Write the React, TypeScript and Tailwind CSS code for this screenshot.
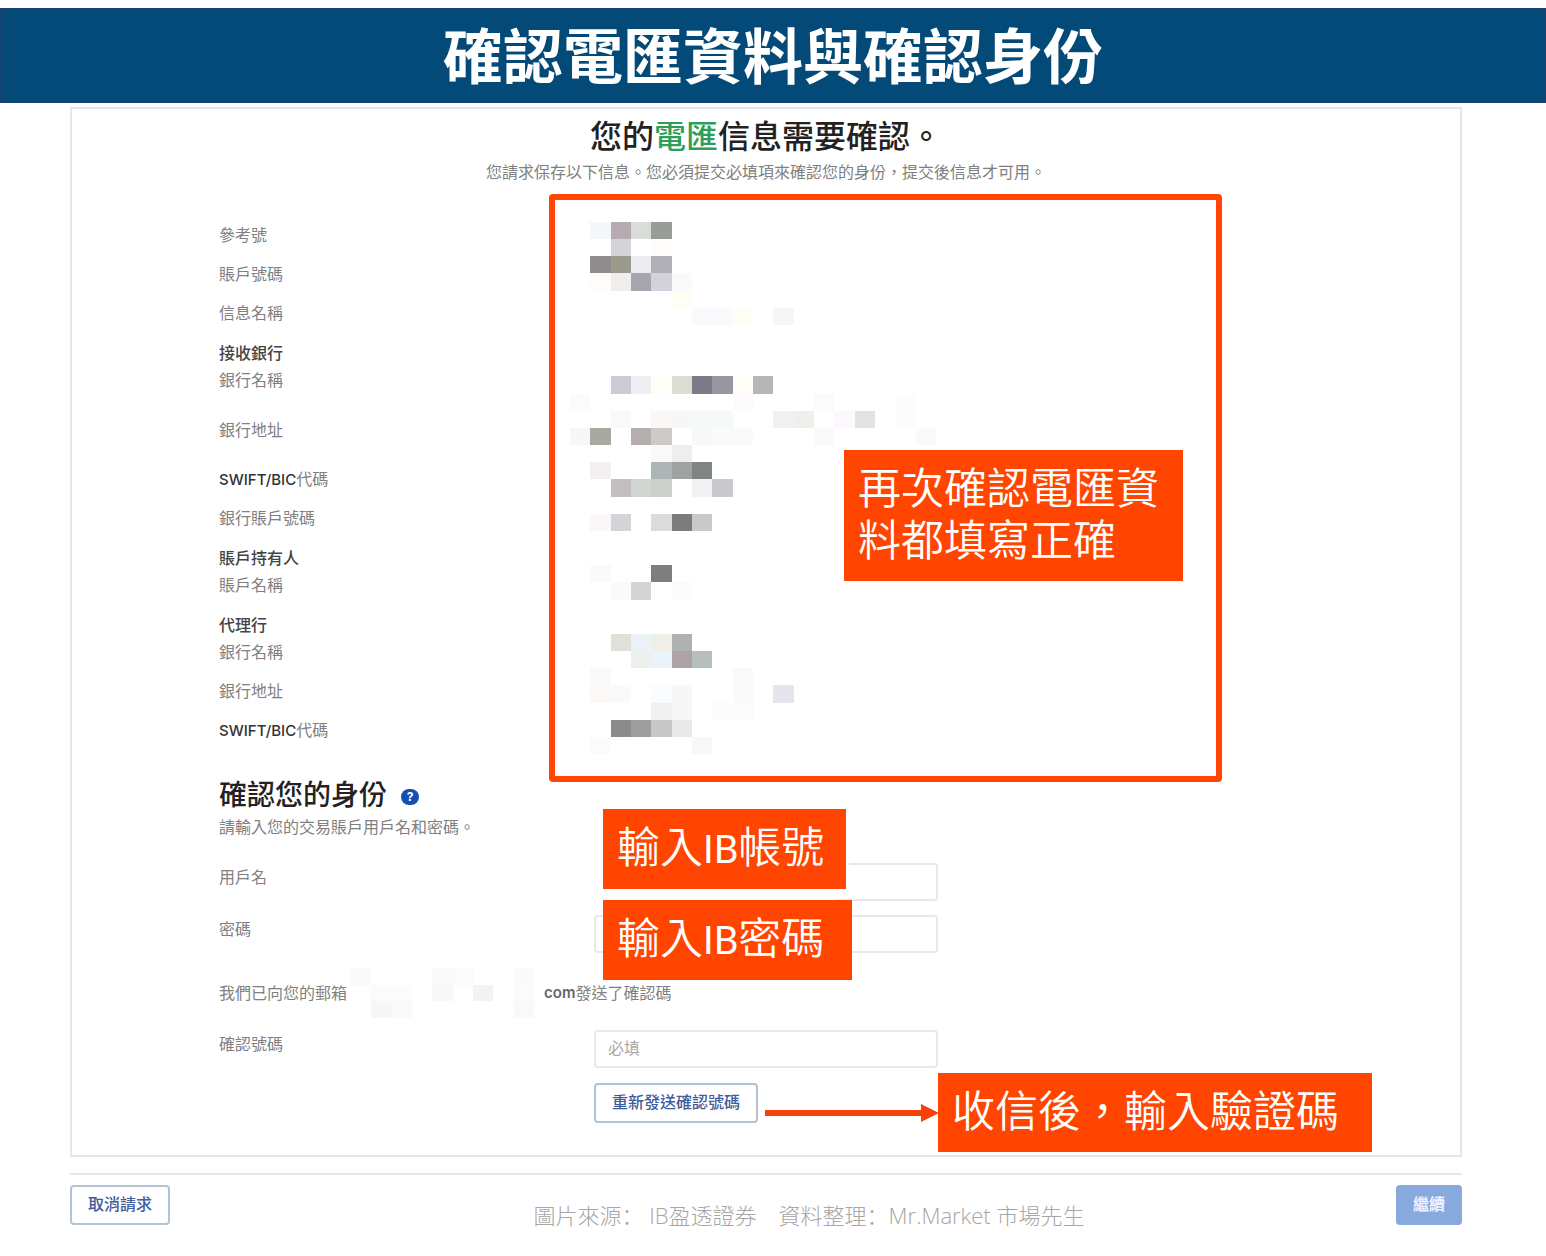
import type { ReactNode } from 'react';

type Cell = [col: number, row: number, color: string];

const detailCells: Cell[] = [
  [1, 0, '#f4f6f9'], [2, 0, '#b5abb0'], [3, 0, '#d9ddd9'], [4, 0, '#9a9c98'],
  [2, 1, '#d3d4d7'], [4, 1, '#fefdf9'],
  [1, 2, '#8f8d8e'], [2, 2, '#9a9b8d'], [3, 2, '#ececf0'], [4, 2, '#b0afb7'],
  [1, 3, '#fefdf9'], [2, 3, '#f0edee'], [3, 3, '#a8a5ae'], [4, 3, '#d3d2db'], [5, 3, '#fafafd'],
  [5, 4, '#fefef4'],
  [6, 5, '#faf9fd'], [7, 5, '#fbf9fc'], [8, 5, '#fefef7'], [10, 5, '#f6f6f7'],
  [2, 9, '#cbccd3'], [3, 9, '#f0edf3'], [4, 9, '#fefef6'], [5, 9, '#d9ddd2'],
  [6, 9, '#7c7c88'], [7, 9, '#9a97a1'], [8, 9, '#fffef6'], [9, 9, '#b4b6b8'],
  [0, 10, '#fbfbfb'], [8, 10, '#fcfafc'], [12, 10, '#fbfafd'], [16, 10, '#fcfcfc'],
  [2, 11, '#fbf9f8'], [4, 11, '#faf8f7'], [5, 11, '#f8f7f7'], [6, 11, '#f3fafa'], [7, 11, '#f5f9fa'],
  [10, 11, '#f2f1f1'], [11, 11, '#efefec'], [13, 11, '#fcf8fd'], [14, 11, '#e3e3e2'], [16, 11, '#fcfcfb'],
  [0, 12, '#f8f7f7'], [1, 12, '#a9a9a2'], [3, 12, '#b6aead'], [4, 12, '#cdcaca'],
  [6, 12, '#f8f7f9'], [7, 12, '#f9fafa'], [8, 12, '#fafafc'], [12, 12, '#fafafb'], [17, 12, '#fafafc'],
  [4, 13, '#faf9f8'], [5, 13, '#efedee'],
  [1, 14, '#f2f0f1'], [4, 14, '#adb6b5'], [5, 14, '#9fa2a1'], [6, 14, '#808485'],
  [2, 15, '#c3bfc0'], [3, 15, '#d2d6d2'], [4, 15, '#cdcfcd'], [6, 15, '#f2f2f4'], [7, 15, '#c9cacd'],
  [1, 17, '#faf7f6'], [2, 17, '#d3d4d7'], [4, 17, '#d9dcd9'], [5, 17, '#7b7c7d'], [6, 17, '#c7c9cb'],
  [1, 20, '#fafafd'], [4, 20, '#7d7e7f'],
  [2, 21, '#fafafd'], [3, 21, '#d5d5d7'], [5, 21, '#fcfafd'],
  [2, 24, '#e0e0d9'], [3, 24, '#eaf2f7'], [4, 24, '#efeee9'], [5, 24, '#aeb0b2'],
  [3, 25, '#edf0ec'], [4, 25, '#ebf3fa'], [5, 25, '#aea3a7'], [6, 25, '#b6bfbe'],
  [1, 26, '#fafafd'], [8, 26, '#f9f9fb'],
  [1, 27, '#fbf8f8'], [2, 27, '#fafafc'], [4, 27, '#fafcff'], [5, 27, '#f7f7f8'], [8, 27, '#fafafa'], [10, 27, '#e5e6ed'],
  [4, 28, '#f0f0f1'], [5, 28, '#f7f7f8'], [7, 28, '#fbfbfc'], [8, 28, '#fbfbfc'],
  [2, 29, '#8b8b8c'], [3, 29, '#9e9e9f'], [4, 29, '#c7c7c8'], [5, 29, '#e9e9ea'],
  [1, 30, '#fbfbfb'], [6, 30, '#f8f8f9'],
];

const emailCells: Cell[] = [
  [0, 0, '#fafafa'], [4, 0, '#fafafa'], [5, 0, '#fbfbfb'], [8, 0, '#fafafa'],
  [1, 1, '#fbfbfb'], [2, 1, '#fbfbfb'], [4, 1, '#f8f8f9'], [6, 1, '#f3f3f4'], [8, 1, '#fbfbfb'],
  [1, 2, '#f6f7f8'], [2, 2, '#fafafa'], [8, 2, '#f9f9f9'],
];

type Row = { type?: 'title' | 'tall'; label: ReactNode };

const swift = (
  <>
    <span className="text-[15px] font-medium text-[#333333]">SWIFT/BIC</span>代碼
  </>
);

const rows: Row[] = [
  { label: '參考號' },
  { label: '賬戶號碼' },
  { label: '信息名稱' },
  { type: 'title', label: '接收銀行' },
  { label: '銀行名稱' },
  { type: 'tall', label: '銀行地址' },
  { label: swift },
  { label: '銀行賬戶號碼' },
  { type: 'title', label: '賬戶持有人' },
  { label: '賬戶名稱' },
  { type: 'title', label: '代理行' },
  { label: '銀行名稱' },
  { label: '銀行地址' },
  { label: swift },
];

const rowStyles = {
  title: 'h-7 pt-3 leading-4 font-medium text-[#444444]',
  tall: 'h-[60px] leading-[60px]',
  normal: 'h-[39px] leading-[39px]',
};

const inputClass =
  'block h-[38px] w-full rounded border-2 border-[#e8e8ec] bg-white px-3 pb-0.5 text-base text-[#666666] placeholder:text-[#aaaaaa]';

const outlineButton =
  'h-10 rounded border-2 border-[#b3c3d6] bg-white px-4 pb-0.5 text-base font-medium whitespace-nowrap text-[#3f5c9e]';

function Mosaic({ cells, cols, rows, className }: { cells: Cell[]; cols: number; rows: number; className: string }) {
  return (
    <svg
      aria-hidden="true"
      className={className}
      viewBox={`0 0 ${cols} ${rows}`}
      preserveAspectRatio="none"
      shapeRendering="crispEdges"
    >
      {cells.map(([x, y, color]) => (
        <rect key={`${x}-${y}`} x={x} y={y} width="1" height="1" fill={color} />
      ))}
    </svg>
  );
}

function Callout({ className, children }: { className: string; children: ReactNode }) {
  return (
    <div
      className={`absolute z-10 bg-[#ff4500] px-[14px] pt-3 pb-[15px] text-[43px] leading-[52px] font-[350] text-white ${className}`}
    >
      {children}
    </div>
  );
}

function Field({ id, label, children }: { id: string; label: string; children: ReactNode }) {
  return (
    <div className="flex">
      <label htmlFor={id} className="w-[375px] shrink-0 pt-0.5 leading-6">
        {label}
      </label>
      <div className="relative w-[344px]">{children}</div>
    </div>
  );
}

export default function App() {
  return (
    <div className="min-h-screen bg-white pt-2 font-[Inter,'Noto_Sans_CJK_TC',sans-serif] text-base text-[#808080]">
      <header className="border border-[#1d3f74] bg-[#034a78] pt-[3px] text-center">
        <h1 className="text-[60px] leading-[90px] font-bold text-white">確認電匯資料與確認身份</h1>
      </header>

      <main className="mt-1 pr-[84px] pl-[70px]">
        <section className="border-2 border-[#e6e6e6] pt-2 pb-8">
          <h2 className="text-center text-[32px] leading-10 font-medium text-[#222222]">
            您的<span className="text-[#2e9e5b]">電匯</span>信息需要確認。
          </h2>
          <p className="text-center leading-[30px]">
            您請求保存以下信息。您必須提交必填項來確認您的身份，提交後信息才可用。
          </p>

          <div className="mt-[7px] flex pr-[238px] pl-[147px]">
            <ul className="w-[330px] shrink-0 pt-[22px] pb-8">
              {rows.map((row, i) => (
                <li key={i} className={rowStyles[row.type ?? 'normal']}>
                  {row.label}
                </li>
              ))}
            </ul>
            <div className="relative flex-1 rounded-sm border-[6px] border-[#ff4500] pt-[22px] pl-[15px]">
              <Mosaic cells={detailCells} cols={18} rows={31} className="h-[532px] w-[366px]" />
              <Callout className="top-[250px] right-[33px] w-[339px]">再次確認電匯資料都填寫正確</Callout>
            </div>
          </div>

          <form className="pl-[147px]" onSubmit={(e) => e.preventDefault()}>
            <div className="flex items-center gap-[14px]">
              <h3 className="text-[28px] leading-[26px] font-medium text-[#222222]">確認您的身份</h3>
              <button
                type="button"
                aria-label="說明"
                className="mt-1 h-4 w-[18px] rounded-full bg-[#1450b4] text-xs leading-4 font-bold text-white"
              >
                ?
              </button>
            </div>
            <p className="mt-[7px] leading-6">請輸入您的交易賬戶用戶名和密碼。</p>

            <div className="mt-6 flex flex-col gap-[14px]">
              <Field id="username" label="用戶名">
                <input id="username" type="text" className={inputClass} />
                <Callout className="-top-[54px] left-[9px] w-[243px] whitespace-nowrap shadow-[-9px_0_white,-9px_13px_white,3px_0_white]">
                  輸入<span className="font-[Lato] text-[38px] font-normal">IB</span>帳號
                </Callout>
              </Field>
              <Field id="password" label="密碼">
                <input id="password" type="password" className={inputClass} />
                <Callout className="-top-[15px] left-[9px] w-[249px] whitespace-nowrap">
                  輸入<span className="font-[Lato] text-[38px] font-normal">IB</span>密碼
                </Callout>
              </Field>
            </div>

            <p className="mt-[15px] flex h-[50px] items-center">
              我們已向您的郵箱
              <Mosaic cells={emailCells} cols={9} rows={3} className="mr-[10px] ml-1 h-[50px] w-[183px]" />
              <b className="text-[15px] font-semibold text-[#666666]">com</b>發送了確認碼
            </p>

            <div className="mt-3">
              <Field id="code" label="確認號碼">
                <input id="code" type="text" placeholder="必填" className={inputClass} />
                <div className="relative mt-[15px]">
                  <button type="button" className={outlineButton}>
                    重新發送確認號碼
                  </button>
                  <svg
                    aria-hidden="true"
                    className="absolute top-5 left-[171px] h-5 w-[174px]"
                    viewBox="0 0 174 20"
                    fill="#f5410a"
                  >
                    <path d="M0 7h156V1l18 9-18 9v-6H0z" />
                  </svg>
                  <Callout className="-top-[10px] left-full w-[434px] whitespace-nowrap">收信後，輸入驗證碼</Callout>
                </div>
              </Field>
            </div>
          </form>
        </section>

        <footer className="mt-4 flex border-t-2 border-[#e6e6e6] pt-[10px]">
          <button type="button" className={outlineButton}>
            取消請求
          </button>
          <p className="flex-1 pt-[14px] pl-[52px] text-center font-['Open_Sans','Noto_Sans_CJK_SC',sans-serif] text-[22px] leading-8 font-light text-[#a6a6a6]">
            圖片來源： IB盈透證券　資料整理：Mr.Market 市場先生
          </p>
          <button type="button" className="h-10 rounded bg-[#87a9de] px-[17px] pb-0.5 text-base font-bold text-[#eef4ff]">
            繼續
          </button>
        </footer>
      </main>
    </div>
  );
}
